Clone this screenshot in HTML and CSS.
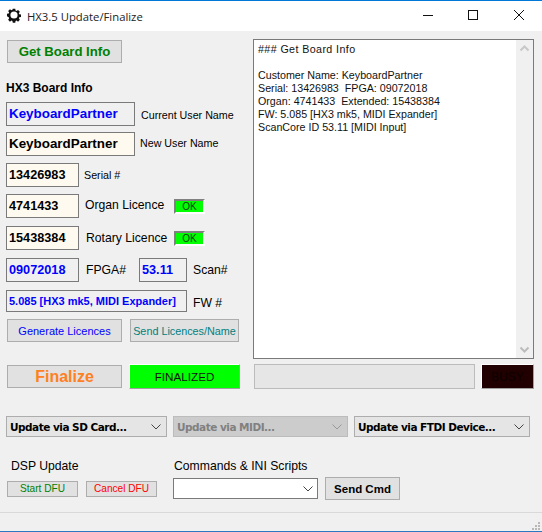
FILE: index.html
```html
<!DOCTYPE html>
<html lang="en">
<head>
  <meta charset="UTF-8" />
  <title>HX3.5 Update/Finalize</title>
  <link rel="stylesheet" href="styles.css">
</head>
<body>
  <div class="window">
    <div class="titlebar">
      <svg class="app-icon" width="16" height="16" viewBox="0 0 16 16">
        <path d="M6.4 0h3.2l.4 2.2 1.3.6 1.9-1.3 2.3 2.3-1.3 1.9.6 1.3 2.2.4v3.2l-2.2.4-.6 1.3 1.3 1.9-2.3 2.3-1.9-1.3-1.3.6-.4 2.2H6.400l-.4-2.200-1.300-.6-1.900 1.300-2.300-2.300 1.300-1.900-.6-1.300L-1 9.600V6.400l2.200-.4.6-1.300-1.300-1.900 2.300-2.300 1.900 1.300 1.300-.6z" transform="translate(1.760 1.760) scale(.78)" fill="#111"/>
        <circle cx="8" cy="8" r="3.600" fill="#fff"/>
      </svg>
      <span class="title-text">HX3.5 Update/Finalize</span>
      <svg class="win-ctl" width="120" height="12" viewBox="0 0 120 12">
        <path d="M1 5.500h10" stroke="#111" fill="none"/>
        <rect x="46.500" y=".5" width="9" height="9" stroke="#111" fill="none"/>
        <path d="M92 0l10 10M102 0L92 10" stroke="#111" fill="none"/>
      </svg>
    </div>

    <div class="content">
      <div class="top">
        <div class="left">
          <button class="btn btn-get">Get Board Info</button>
          <div class="group-title">HX3 Board Info</div>

          <div class="row row-first">
            <div class="field wide readonly blue">KeyboardPartner</div>
            <span class="lbl lbl-small lbl-current">Current User Name</span>
          </div>
          <div class="row row-6">
            <div class="field wide">KeyboardPartner</div>
            <span class="lbl lbl-small lbl-new">New User Name</span>
          </div>
          <div class="row row-7">
            <div class="field narrow">13426983</div>
            <span class="lbl lbl-small lbl-serial">Serial #</span>
          </div>
          <div class="row row-7">
            <div class="field narrow">4741433</div>
            <span class="lbl lbl-organ">Organ Licence</span>
            <span class="led led-organ">OK</span>
          </div>
          <div class="row row-8">
            <div class="field narrow">15438384</div>
            <span class="lbl lbl-rotary">Rotary Licence</span>
            <span class="led led-rotary">OK</span>
          </div>
          <div class="row row-8">
            <div class="field narrow readonly blue">09072018</div>
            <span class="lbl lbl-fpga">FPGA#</span>
            <div class="field scan readonly blue">53.11</div>
            <span class="lbl lbl-scan">Scan#</span>
          </div>
          <div class="row row-8">
            <div class="field fw readonly blue">5.085 [HX3 mk5, MIDI Expander]</div>
            <span class="lbl lbl-fw">FW #</span>
          </div>
          <div class="row row-btns">
            <button class="btn btn-gen">Generate Licences</button>
            <button class="btn btn-send">Send Licences/Name</button>
          </div>
        </div>

        <div class="log">
          <pre class="log-text"><span class="log-head">### Get Board Info</span>

Customer Name: KeyboardPartner
Serial: 13426983  FPGA: 09072018
Organ: 4741433  Extended: 15438384
FW: 5.085 [HX3 mk5, MIDI Expander]
ScanCore ID 53.11 [MIDI Input]</pre>
          <div class="scrollbar">
            <svg width="17" height="17" viewBox="0 0 17 17"><path d="M4.500 10.500L8.500 6.500l4 4" stroke="#c8c8c8" stroke-width="2" fill="none"/></svg>
            <svg width="17" height="17" viewBox="0 0 17 17"><path d="M4.500 6.500l4 4 4-4" stroke="#bcbcbc" stroke-width="2" fill="none"/></svg>
          </div>
        </div>
      </div>

      <div class="status-row">
        <button class="btn btn-final">Finalize</button>
        <div class="panel finalized">FINALIZED</div>
        <div class="progress"></div>
        <div class="panel busy">BUSY</div>
      </div>

      <div class="update-row">
        <div class="combo c1"><span>Update via SD Card...</span><svg width="10" height="6" viewBox="0 0 10 6"><path d="M.5.500L5 5 9.500.500" stroke="#444" fill="none"/></svg></div>
        <div class="combo c2 disabled"><span>Update via MIDI...</span><svg width="10" height="6" viewBox="0 0 10 6"><path d="M.5.500L5 5 9.500.500" stroke="#999" fill="none"/></svg></div>
        <div class="combo c3"><span>Update via FTDI Device...</span><svg width="10" height="6" viewBox="0 0 10 6"><path d="M.5.500L5 5 9.500.500" stroke="#444" fill="none"/></svg></div>
      </div>

      <div class="bottom">
        <div class="dsp">
          <div class="lbl dsp-title">DSP Update</div>
          <div class="dsp-btns">
            <button class="btn btn-dfu green">Start DFU</button>
            <button class="btn btn-dfu red">Cancel DFU</button>
          </div>
        </div>
        <div class="cmds">
          <div class="lbl cmd-title">Commands &amp; INI Scripts</div>
          <div class="cmd-row">
            <div class="cmd-box"><svg width="10" height="6" viewBox="0 0 10 6"><path d="M.5.500L5 5 9.500.500" stroke="#444" fill="none"/></svg></div>
            <button class="btn btn-cmd">Send Cmd</button>
          </div>
        </div>
      </div>
    </div>

    <div class="statusbar">
      <svg class="grip" width="8" height="8" viewBox="0 0 8 8" fill="#b8b8b8">
        <rect x="6" y="0" width="2" height="2"/><rect x="3" y="3" width="2" height="2"/><rect x="6" y="3" width="2" height="2"/>
        <rect x="0" y="6" width="2" height="2"/><rect x="3" y="6" width="2" height="2"/><rect x="6" y="6" width="2" height="2"/>
      </svg>
    </div>
  </div>
</body>
</html>
```

FILE: styles.css
```css
html, body {
  margin: 0;
  padding: 0;
}

body {
  font-family: "Liberation Sans", Arial, sans-serif;
  font-size: 12px;
  color: #000;
  background: #f0f0f0;
}

.window {
  width: 542px;
  height: 532px;
  box-sizing: border-box;
  border-top: 1px solid #0078d7;
  border-bottom: 1px solid #2b78c0;
  background: #f0f0f0;
  display: flex;
  flex-direction: column;
  overflow: hidden;
}

.titlebar {
  height: 30px;
  flex: none;
  background: #fff;
  display: flex;
  align-items: center;
  padding-left: 6px;
}

.app-icon {
  margin-right: 5px;
  margin-top: -2px;
}

.title-text {
  font-family: "Open Sans", sans-serif;
  font-size: 11.300px;
  color: #222;
}

.win-ctl {
  margin-left: auto;
}

.content {
  flex: 1;
  padding: 8px 8px 0 6px;
  display: flex;
  flex-direction: column;
}

.top {
  display: flex;
  height: 320px;
  flex: none;
}

.left {
  width: 247px;
  flex: none;
}

.btn {
  font-family: "Liberation Sans", Arial, sans-serif;
  background: #e1e1e1;
  border: 1px solid #adadad;
  padding: 0;
  box-sizing: border-box;
  display: block;
}

.btn-get {
  width: 115px;
  height: 23px;
  margin: 1px 0 0 1px;
  color: #008000;
  font-size: 13.200px;
  font-weight: bold;
}

.group-title {
  font-weight: bold;
  margin-top: 18px;
  height: 14px;
  line-height: 14px;
}

.row {
  display: flex;
  align-items: center;
}

.row-first {
  margin-top: 7px;
}

.row-6 {
  margin-top: 6px;
}

.row-7 {
  margin-top: 7px;
}

.row-8 {
  margin-top: 8px;
}

.field {
  height: 24px;
  box-sizing: border-box;
  border: 1px solid #7a7a7a;
  background: #fffaf0;
  font-weight: bold;
  font-size: 12.700px;
  line-height: 22px;
  padding-left: 2px;
  flex: none;
  white-space: nowrap;
}

.readonly {
  background: #f0f0f0;
}

.blue {
  color: #0000ff;
}

.wide {
  width: 129px;
  font-size: 13.400px;
}

.narrow {
  width: 73px;
}

.scan {
  width: 48px;
  margin-left: 14px;
}

.fw {
  width: 181px;
  height: 22px;
  line-height: 20px;
  font-size: 11px;
}

.lbl {
  font-size: 12.200px;
  white-space: nowrap;
}

.lbl-small {
  font-size: 10.700px;
}

.lbl-current {
  margin-left: 6px;
  margin-top: 2px;
}

.lbl-new {
  margin-left: 5px;
  margin-top: -2px;
}

.lbl-serial {
  margin-left: 5px;
}

.lbl-organ {
  margin-left: 6px;
  margin-top: -3px;
  width: 80px;
}

.lbl-rotary {
  margin-left: 7px;
  width: 80px;
}

.lbl-fpga {
  margin-left: 7px;
  width: 39px;
}

.lbl-scan {
  margin-left: 6px;
}

.lbl-fw {
  margin-left: 6px;
  margin-top: 3px;
}

.led {
  width: 31px;
  height: 15px;
  box-sizing: border-box;
  background: #00ff00;
  border: 2px solid;
  border-color: #808080 #fff #fff #808080;
  font-size: 10px;
  line-height: 11px;
  text-align: center;
  color: #0a3a0a;
  flex: none;
}

.led-organ {
  margin-left: 9px;
}

.led-rotary {
  margin-left: 8px;
}

.row-btns {
  margin-top: 7px;
  margin-left: 1px;
  gap: 8px;
  align-items: flex-start;
}

.btn-gen {
  width: 115px;
  height: 23px;
  color: #0000ff;
  font-size: 11px;
}

.btn-send {
  width: 109px;
  height: 23px;
  color: #008080;
  font-size: 10.800px;
  white-space: nowrap;
}

.log {
  margin-left: 0;
  width: 281px;
  height: 320px;
  box-sizing: border-box;
  border: 1px solid #7a7a7a;
  background: #fff;
  display: flex;
  flex: none;
}

.log-text {
  flex: 1;
  margin: 0;
  padding: 3px 0 0 4px;
  font-family: "Liberation Sans", Arial, sans-serif;
  font-size: 10.700px;
  line-height: 13px;
  color: #111;
}

.log-head {
  letter-spacing: 0.4px;
}

.scrollbar {
  width: 17px;
  flex: none;
  background: #f0f0f0;
  display: flex;
  flex-direction: column;
  justify-content: space-between;
}

.status-row {
  display: flex;
  margin-top: 5px;
  height: 25px;
  flex: none;
}

.btn-final {
  width: 115px;
  height: 23px;
  margin: 1px 0 0 1px;
  color: #ff8020;
  font-size: 16px;
  font-weight: bold;
}

.panel {
  box-sizing: border-box;
  height: 25px;
  border: 1px solid;
  border-color: #fff #a0a0a0 #a0a0a0 #fff;
  text-align: center;
  line-height: 24px;
}

.finalized {
  width: 111px;
  margin-left: 7px;
  background: #00ff00;
  color: #111;
  font-size: 11.700px;
}

.progress {
  width: 221px;
  height: 25px;
  margin-left: 14px;
  box-sizing: border-box;
  background: #e6e6e6;
  border: 1px solid #bcbcbc;
}

.busy {
  width: 53px;
  margin-left: 6px;
  background: #200000;
  color: #0c0000;
}

.update-row {
  display: flex;
  gap: 6px;
  margin-top: 27px;
  flex: none;
}

.combo {
  height: 21px;
  box-sizing: border-box;
  background: #e5e5e5;
  border: 1px solid #adadad;
  display: flex;
  align-items: center;
  justify-content: space-between;
  padding: 1px 5px 0 3px;
  font-family: "DejaVu Sans", sans-serif;
  font-size: 10.500px;
  font-weight: bold;
  letter-spacing: -0.5px;
  white-space: nowrap;
}

.c1 {
  width: 161px;
}

.c2 {
  width: 175px;
}

.c3 {
  width: 176px;
}

.disabled {
  background: #cccccc;
  color: #808080;
  border-color: #bcbcbc;
}

.bottom {
  display: flex;
  margin-top: 22px;
  flex: none;
}

.dsp {
  width: 167px;
  flex: none;
}

.dsp-title {
  margin-left: 5px;
  height: 14px;
  line-height: 14px;
}

.dsp-btns {
  display: flex;
  gap: 8px;
  margin: 8px 0 0 1px;
}

.btn-dfu {
  width: 71px;
  height: 16px;
  font-size: 10.100px;
  line-height: 14px;
}

.green {
  color: #008000;
}

.red {
  color: #ff0000;
}

.cmd-title {
  margin-left: 1px;
  height: 14px;
  line-height: 14px;
}

.cmd-row {
  display: flex;
  margin-top: 4px;
  gap: 7px;
  align-items: center;
}

.cmd-box {
  width: 145px;
  height: 21px;
  box-sizing: border-box;
  background: #fff;
  border: 1px solid #7a7a7a;
  display: flex;
  align-items: center;
  justify-content: flex-end;
  padding-right: 4px;
}

.btn-cmd {
  width: 75px;
  height: 23px;
  font-size: 11.500px;
  font-weight: bold;
}

.statusbar {
  height: 19px;
  flex: none;
  border-top: 1px solid #d9d9d9;
  box-sizing: border-box;
  display: flex;
  justify-content: flex-end;
  align-items: flex-end;
  padding: 0 2px 1px 0;
}
```
